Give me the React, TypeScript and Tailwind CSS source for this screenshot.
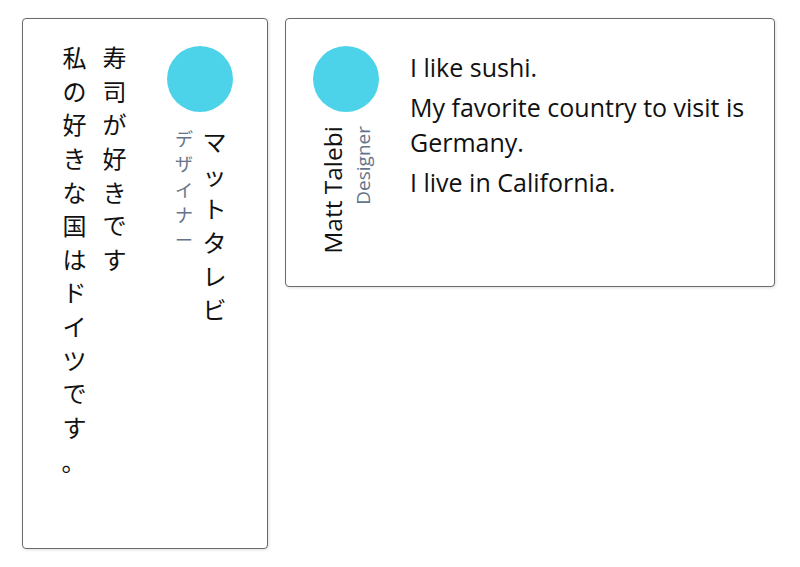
const sans = "font-['Open_Sans','Noto_Sans_CJK_JP',sans-serif]";

function Avatar() {
  return <div className="w-[66px] h-[66px] shrink-0 rounded-full bg-[#4dd3e9]" />;
}

function JapaneseCard() {
  return (
    <div
      className={`${sans} [writing-mode:vertical-rl] [font-feature-settings:'vert'_0,'vrt2'_0] w-[246px] h-[531px] shrink-0 rounded-[4px] border border-[#6a6a6a] bg-white pt-[27px] pr-[34px] shadow-[1px_1px_3px_rgba(0,0,0,0.12)] flex flex-col gap-[31px] text-[#111]`}
    >
      <div className="flex items-center gap-[18px]">
        <Avatar />
        <div>
          <div className="text-[24px] leading-[35px] tracking-[9.6px]">マットタレビ</div>
          <div className="text-[18px] leading-[27px] tracking-[7.4px] text-[#64748b]">デザイナー</div>
        </div>
      </div>
      <div className="text-[24px] leading-[35px] tracking-[9.6px]">
        <p className="my-[5px] first:mt-0">寿司が好きです</p>
        <p className="my-[5px]">
          私の好きな国はドイツです<span className="[text-combine-upright:all]">。</span>
        </p>
      </div>
    </div>
  );
}

function EnglishCard() {
  return (
    <div
      className={`${sans} w-[490px] h-[269px] shrink-0 rounded-[4px] border border-[#6a6a6a] bg-white pt-[26px] pl-[27px] shadow-[1px_1px_3px_rgba(0,0,0,0.12)] flex items-start gap-[31px] text-[#111]`}
    >
      <div className="flex flex-col items-center gap-[14px] pt-px">
        <Avatar />
        <div className="[writing-mode:vertical-rl] rotate-180 text-end">
          <div className="text-[24.5px] leading-[35px]">Matt Talebi</div>
          <div className="text-[19px] leading-[27px] text-[#64748b]">Designer</div>
        </div>
      </div>
      <div className="text-[25px] leading-[35px]">
        <p className="my-[5px]">I like sushi.</p>
        <p className="my-[5px]">My favorite country to visit is Germany.</p>
        <p className="my-[5px]">I live in California.</p>
      </div>
    </div>
  );
}

export default function App() {
  return (
    <div className="min-h-screen bg-white pl-[22px] pt-[18px] flex items-start gap-[17px]">
      <JapaneseCard />
      <EnglishCard />
    </div>
  );
}
